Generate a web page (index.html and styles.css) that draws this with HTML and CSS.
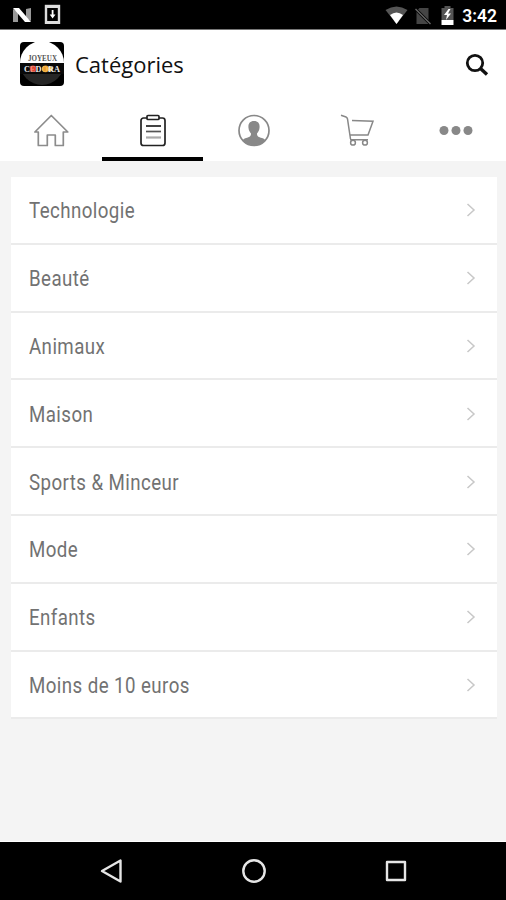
FILE: index.html
```
<!DOCTYPE html>
<html lang="fr">
	<head>
	<meta charset="utf-8">
	<meta name="viewport" content="width=device-width, initial-scale=1">
	<title>Catégories</title>
	<link rel="stylesheet" href="styles.css">
	</head>
	<body>
		<div class="status-bar">
			<svg class="status-left" width="50" height="24" viewBox="0 0 50 24">
				<path d="M1 9l5 3v10H1zM14 9l5-1v13l-5-3z" fill="#999"/>
				<path d="M1 8h6l12 14h-6z" fill="#fff"/>
				<rect x="34" y="6" width="13" height="17" fill="none" stroke="#ddd" stroke-width="2.400"/>
				<path d="M33 5h15v3H33zM33 21h15v3H33z" fill="#ddd"/>
				<path d="M39.700 10h1.800v4.500h2l-2.900 4-2.900-4h2z" fill="#fff"/>
			</svg>
			<div class="status-right">
				<svg width="70" height="20" viewBox="-1.500 0 70 20">
					<path d="M0 4Q11 -3 22 4L11 18z" fill="#555"/>
					<path d="M4.500 9Q11 4 17.500 9L11 18z" fill="#fff"/>
					<path d="M34 2h9v16H31V5z" fill="#454545"/>
					<path d="M29 2l17 17" stroke="#000" stroke-width="3"/>
					<path d="M30 3l15 15" stroke="#666" stroke-width="1.400"/>
					<path d="M59 0h6v2h3v12H56V2h3z" fill="#555"/>
					<path d="M56 14h12v5H56z" fill="#fff"/>
					<path d="M63 3l-4.500 6h3l-1 5 5-6.500h-3L65 3z" fill="#fff"/>
				</svg>
				<span class="clock">3:42</span>
			</div>
		</div>

		<div class="header">
			<svg class="logo" width="44" height="44" viewBox="0 0 44 44">
				<clipPath id="round"><rect width="44" height="44" rx="4"/></clipPath>
				<g clip-path="url(#round)">
					<rect width="44" height="44" fill="#000"/>
					<circle cx="22" cy="21" r="22" fill="#262626"/>
					<path d="M0 21a22 22 0 0 1 44 0z" fill="#fff"/>
					<rect y="21" width="44" height="11" fill="#090909"/>
				</g>
				<circle cx="13" cy="26.800" r="3.200" fill="#e0402f"/>
				<circle cx="25.500" cy="26.800" r="3.400" fill="#ef9d2f"/>
				<circle cx="30" cy="27" r="2.500" fill="#eebf3b"/>
				<text x="8" y="18.500" textLength="29" lengthAdjust="spacingAndGlyphs" class="logo-text" fill="#555">JOYEUX</text>
				<text x="4" y="29.500" textLength="36" lengthAdjust="spacingAndGlyphs" class="logo-text" fill="#eee"><tspan>C</tspan><tspan fill="#f0907c">E</tspan><tspan>D</tspan><tspan fill="#f5c15b">O</tspan><tspan>RA</tspan></text>
			</svg>
			<h1 class="title">Catégories</h1>
			<svg class="search" width="24" height="24" viewBox="0 0 24 24" fill="none" stroke="#111">
				<circle cx="10" cy="10" r="7.700" stroke-width="2.800"/>
				<path d="M15.500 15.500l6.500 6" stroke-width="3.400"/>
			</svg>
		</div>

		<div class="tabs">
			<div class="tab">
				<svg width="36" height="34" viewBox="0.700 0.500 36 34" fill="none" stroke="#8c8c8c" stroke-width="1.700">
					<path d="M1.600 18.500L18 2l16.500 16.500h-4.500V32h-8V21.500h-8V32H5V18.500z" stroke-linejoin="round"/>
				</svg>
			</div>
			<div class="tab active">
				<svg width="36" height="34" viewBox="0 0 36 34" fill="none" stroke="#222" stroke-width="1.700">
					<path d="M12 4H8.500a2.500 2.500 0 0 0-2.500 2.500v22.500A2.500 2.500 0 0 0 8.500 31.500h19a2.500 2.500 0 0 0 2.500-2.500v-22.500A2.500 2.500 0 0 0 27.500 4H24"/>
					<rect x="12" y="1.500" width="12" height="4" rx="1"/>
					<path d="M11 12h15"/>
					<path d="M11 17.500h15" stroke="#555"/>
					<path d="M11 23.500h15" stroke="#aaa" stroke-width="2.200"/>
				</svg>
			</div>
			<div class="tab">
				<svg width="36" height="34" viewBox="0 0 36 34">
					<clipPath id="face"><circle cx="18" cy="16.500" r="15"/></clipPath>
					<circle cx="18" cy="16.500" r="15" fill="none" stroke="#888" stroke-width="1.700"/>
					<path d="M18 7c-4.500 0-6 3-5.500 7 .3 3 1.500 4 2.500 5.500 0 3-1.500 3.500-5 4.500-3 1-4 2.500-4 4.500l12 6 12-6c0-2-1-3.500-4-4.500-3.500-1-5-1.500-5-4.500 1-1.500 2.200-2.500 2.500-5.500C24 10 22.500 7 18 7z" fill="#888" clip-path="url(#face)"/>
				</svg>
			</div>
			<div class="tab">
				<svg width="40" height="34" viewBox="-5 0 40 34" fill="none" stroke="#888" stroke-width="1.500">
					<path d="M1 1.200l5 1.800c1 .4 1.300 1 1.500 2l3 20M12 6.500l21 .7-5 13.800H10M10 25.700h18"/>
					<circle cx="13" cy="28.700" r="2.400"/>
					<circle cx="25" cy="28.700" r="2.400"/>
				</svg>
			</div>
			<div class="tab">
				<svg width="36" height="34" viewBox="0 0 36 34" fill="#888">
					<circle cx="6" cy="16.500" r="4.500"/>
					<circle cx="18" cy="16.500" r="4.500"/>
					<circle cx="30" cy="16.500" r="4.500"/>
				</svg>
			</div>
		</div>

		<div class="content">
			<div class="list">
				<div class="row"><span class="label">Technologie</span><svg class="arrow" viewBox="0 0 10 16"><path d="M1.500 2L8 8l-6.500 6"/></svg></div>
				<div class="row"><span class="label">Beauté</span><svg class="arrow" viewBox="0 0 10 16"><path d="M1.500 2L8 8l-6.500 6"/></svg></div>
				<div class="row"><span class="label">Animaux</span><svg class="arrow" viewBox="0 0 10 16"><path d="M1.500 2L8 8l-6.500 6"/></svg></div>
				<div class="row"><span class="label">Maison</span><svg class="arrow" viewBox="0 0 10 16"><path d="M1.500 2L8 8l-6.500 6"/></svg></div>
				<div class="row"><span class="label">Sports &amp; Minceur</span><svg class="arrow" viewBox="0 0 10 16"><path d="M1.500 2L8 8l-6.500 6"/></svg></div>
				<div class="row"><span class="label">Mode</span><svg class="arrow" viewBox="0 0 10 16"><path d="M1.500 2L8 8l-6.500 6"/></svg></div>
				<div class="row"><span class="label">Enfants</span><svg class="arrow" viewBox="0 0 10 16"><path d="M1.500 2L8 8l-6.500 6"/></svg></div>
				<div class="row"><span class="label">Moins de 10 euros</span><svg class="arrow" viewBox="0 0 10 16"><path d="M1.500 2L8 8l-6.500 6"/></svg></div>
			</div>
		</div>

		<div class="nav-bar">
			<svg width="26" height="26" viewBox="0 0 26 26"><path d="M3 13L21.500 2.500v21z"/></svg>
			<svg width="26" height="26" viewBox="0 0 26 26"><circle cx="13" cy="13" r="10.700"/></svg>
			<svg width="26" height="26" viewBox="0 0 26 26"><rect x="4" y="4" width="18" height="18"/></svg>
		</div>
	</body>
</html>
```
FILE: styles.css
```
* {
	box-sizing: border-box;
}

body {
	margin: 0;
	height: 900px;
	display: flex;
	flex-direction: column;
	font-family: Roboto, sans-serif;
	background-color: #f4f4f4;
	overflow: hidden;
}
svg {
	display: block;
	flex: none;
}

.status-bar {
	height: 30px;
	padding: 0 9px 0 12px;
	display: flex;
	justify-content: space-between;
	background-color: #000;
	border-bottom: 1px solid #777;
}
.status-left {
	height: 24px;
}
.status-right {
	display: flex;
	align-items: center;
	gap: 8px;
	padding-top: 2px;
}
.clock {
	color: #fff;
	font-size: 17.5px;
	font-weight: 600;
	line-height: 20px;
}

.header {
	height: 70px;
	padding: 0 17px 2px 20px;
	display: flex;
	align-items: center;
	background-color: #fff;
}
.logo-text {
	font-family: 'Liberation Serif', serif;
	font-size: 8px;
	font-weight: bold;
}
.title {
	margin: 0 auto 0 11px;
	font-family: 'Open Sans', sans-serif;
	font-size: 22px;
	font-weight: 400;
	line-height: 30px;
	color: #111;
}
.search {
	margin-top: 2px;
}

.tabs {
	height: 61px;
	padding-left: 1px;
	display: grid;
	grid-template-columns: repeat(5, 1fr);
	background-color: #fff;
}
.tab {
	display: flex;
	justify-content: center;
	padding-top: 14px;
	border-bottom: 4px solid transparent;
}
.active {
	border-bottom-color: #000;
}

.content {
	flex: 1;
	padding: 16px 9px 0 11px;
	border-bottom: 1px solid #fff;
}
.row {
	height: 67.8px;
	padding: 2px 21px 0 18px;
	display: flex;
	align-items: center;
	justify-content: space-between;
	background-color: #fff;
	border-bottom: 2px solid #ebebeb;
}
.label {
	color: #727272;
	font-size: 22px;
	letter-spacing: 0.5px;
	white-space: nowrap;
	transform: scaleX(0.85);
	transform-origin: left;
}
.arrow {
	width: 10px;
	height: 16px;
	margin-top: -1px;
	fill: none;
	stroke: #c8c8c8;
	stroke-width: 1.5;
}

.nav-bar {
	height: 58px;
	padding: 0 97px 0 99px;
	display: flex;
	align-items: center;
	justify-content: space-between;
	background-color: #000;
}
.nav-bar svg {
	fill: none;
	stroke: #e6e6e6;
	stroke-width: 2.4;
	stroke-linejoin: round;
}
```
